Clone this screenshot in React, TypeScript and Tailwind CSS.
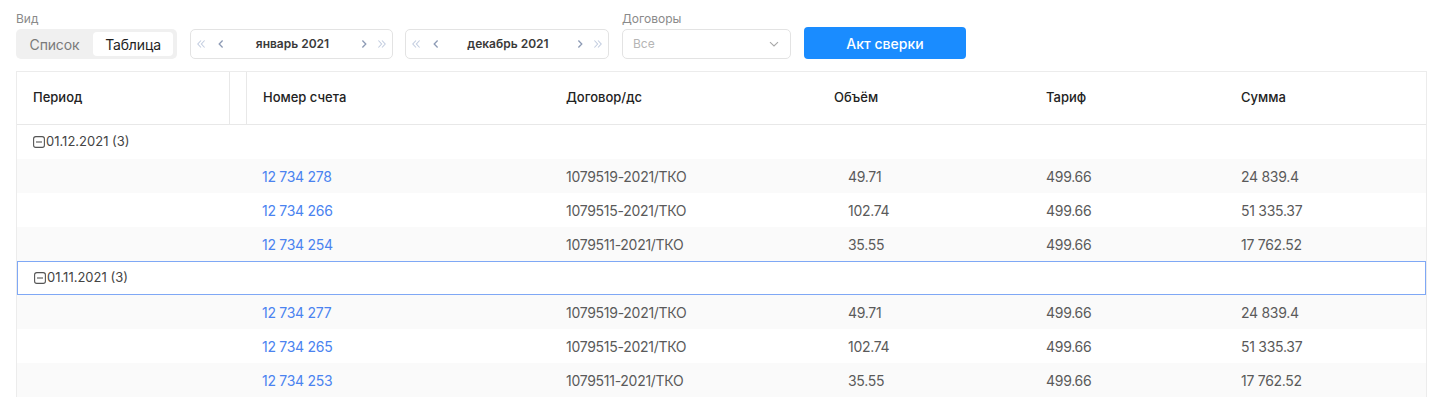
import React from "react";

const cols = "grid grid-cols-[213px_17px_302px_282px_198px_195px_204px]";

type Row = { num: string; dog: string; vol: string; tar: string; sum: string };

const groups: { date: string; selected?: boolean; rows: Row[] }[] = [
  {
    date: "01.12.2021 (3)",
    rows: [
      { num: "12 734 278", dog: "1079519-2021/ТКО", vol: "49.71", tar: "499.66", sum: "24 839.4" },
      { num: "12 734 266", dog: "1079515-2021/ТКО", vol: "102.74", tar: "499.66", sum: "51 335.37" },
      { num: "12 734 254", dog: "1079511-2021/ТКО", vol: "35.55", tar: "499.66", sum: "17 762.52" },
    ],
  },
  {
    date: "01.11.2021 (3)",
    selected: true,
    rows: [
      { num: "12 734 277", dog: "1079519-2021/ТКО", vol: "49.71", tar: "499.66", sum: "24 839.4" },
      { num: "12 734 265", dog: "1079515-2021/ТКО", vol: "102.74", tar: "499.66", sum: "51 335.37" },
      { num: "12 734 253", dog: "1079511-2021/ТКО", vol: "35.55", tar: "499.66", sum: "17 762.52" },
    ],
  },
];

function DblLeft({ className = "" }: { className?: string }) {
  return (
    <svg width="10" height="10" viewBox="0 0 10 10" className={className} fill="none" stroke="currentColor" strokeWidth="1.1">
      <path d="M5 1.5 L1.8 5 L5 8.5 M8.6 1.5 L5.4 5 L8.6 8.5" />
    </svg>
  );
}
function DblRight({ className = "" }: { className?: string }) {
  return (
    <svg width="10" height="10" viewBox="0 0 10 10" className={className} fill="none" stroke="currentColor" strokeWidth="1.1">
      <path d="M1.4 1.5 L4.6 5 L1.4 8.5 M5 1.5 L8.2 5 L5 8.5" />
    </svg>
  );
}
function Left({ className = "" }: { className?: string }) {
  return (
    <svg width="10" height="10" viewBox="0 0 10 10" className={className} fill="none" stroke="currentColor" strokeWidth="1.3">
      <path d="M6.6 1.5 L3.2 5 L6.6 8.5" />
    </svg>
  );
}
function Right({ className = "" }: { className?: string }) {
  return (
    <svg width="10" height="10" viewBox="0 0 10 10" className={className} fill="none" stroke="currentColor" strokeWidth="1.3">
      <path d="M3.4 1.5 L6.8 5 L3.4 8.5" />
    </svg>
  );
}

function MonthPicker({ label, w }: { label: string; w: string }) {
  return (
    <div className={`${w} h-[30px] rounded-[5px] border border-[#e3e3e3] bg-white flex items-center px-[5px]`}>
      <DblLeft className="text-[#c3cde0]" />
      <Left className="ml-[10px] text-[#8d9bb5]" />
      <div className="flex-1 text-center text-[12px] font-semibold text-[#3a3a3a]">{label}</div>
      <Right className="text-[#8d9bb5]" />
      <DblRight className="ml-[8px] text-[#c3cde0]" />
    </div>
  );
}

function MinusSquare() {
  return (
    <svg width="12" height="12" viewBox="0 0 12 12" fill="none" className="mr-[1px]">
      <rect x="0.6" y="0.6" width="10.8" height="10.8" rx="2.2" stroke="#555" strokeWidth="1.1" />
      <path d="M3 6 H9" stroke="#555" strokeWidth="1.1" />
    </svg>
  );
}

export default function App() {
  return (
    <div className="w-[1431px] h-[398px] bg-white overflow-hidden font-['Inter',sans-serif]">
      {/* toolbar */}
      <div className="flex items-end pl-4 pt-[10px] h-[59px]">
        <div className="flex flex-col">
          <div className="text-[12px] leading-[16px] text-[#8a8a8a] mb-[2px]">Вид</div>
          <div className="w-[161px] h-[30px] rounded-[5px] bg-[#f0f0f0] flex items-center p-[3px]">
            <div className="w-[74px] text-center text-[14px] tracking-[-0.01em] text-[#7a7a7a] pr-[3px]">Список</div>
            <div className="w-[80px] h-[24px] rounded-[4px] bg-white flex items-center justify-center text-[14px] tracking-[-0.01em] text-[#1f1f1f]">Таблица</div>
          </div>
        </div>
        <div className="ml-[13px]">
          <MonthPicker label="январь 2021" w="w-[203px]" />
        </div>
        <div className="ml-[12px]">
          <MonthPicker label="декабрь 2021" w="w-[204px]" />
        </div>
        <div className="flex flex-col ml-[13px]">
          <div className="text-[12px] leading-[16px] text-[#8a8a8a] mb-[2px]">Договоры</div>
          <div className="w-[169px] h-[30px] rounded-[5px] border border-[#e3e3e3] bg-white flex items-center justify-between pl-[10px] pr-[10px]">
            <span className="text-[12px] text-[#b5b5b5]">Все</span>
            <svg width="12" height="12" viewBox="0 0 12 12" fill="none" stroke="#a8a8a8" strokeWidth="1.1">
              <path d="M2 4.2 L6 8 L10 4.2" />
            </svg>
          </div>
        </div>
        <button className="ml-[13px] w-[162px] h-[32px] rounded-[4px] bg-[#1a8cff] text-white text-[14px] font-medium">
          Акт сверки
        </button>
      </div>

      {/* table */}
      <div className="ml-4 mt-[12px] w-[1411px] border-l border-r border-t border-[#ececec] text-[14px] tracking-[-0.02em]">
        <div className={`${cols} h-[53px] border-b border-[#e8e8e8] text-[13px] font-medium text-[#222] tracking-normal`}>
          <div className="flex items-center pl-[16px] border-r border-[#e8e8e8]">Период</div>
          <div className="border-r border-[#e8e8e8]"></div>
          <div className="flex items-center pl-[16px]">Номер счета</div>
          <div className="flex items-center pl-[17px]">Договор/дс</div>
          <div className="flex items-center pl-[3px]">Объём</div>
          <div className="flex items-center pl-[17px]">Тариф</div>
          <div className="flex items-center pl-[17px]">Сумма</div>
        </div>
        {groups.map((g) => (
          <div key={g.date}>
            <div
              className={`h-[34px] flex items-center pl-[16px] text-[13px] text-[#444] tracking-normal ${
                g.selected ? "border border-[#7fa8f5]" : ""
              }`}
            >
              <MinusSquare />
              <span>{g.date}</span>
            </div>
            {g.rows.map((r, i) => (
              <div key={r.num} className={`${cols} h-[34px] items-center text-[#5a5a5a] ${i % 2 === 0 ? "bg-[#fafafa]" : "bg-white"}`}>
                <div></div>
                <div></div>
                <div className="pl-[15px] text-[#4a83f0]">{r.num}</div>
                <div className="pl-[17px]">{r.dog}</div>
                <div className="pl-[17px]">{r.vol}</div>
                <div className="pl-[17px]">{r.tar}</div>
                <div className="pl-[17px]">{r.sum}</div>
              </div>
            ))}
          </div>
        ))}
      </div>
    </div>
  );
}
